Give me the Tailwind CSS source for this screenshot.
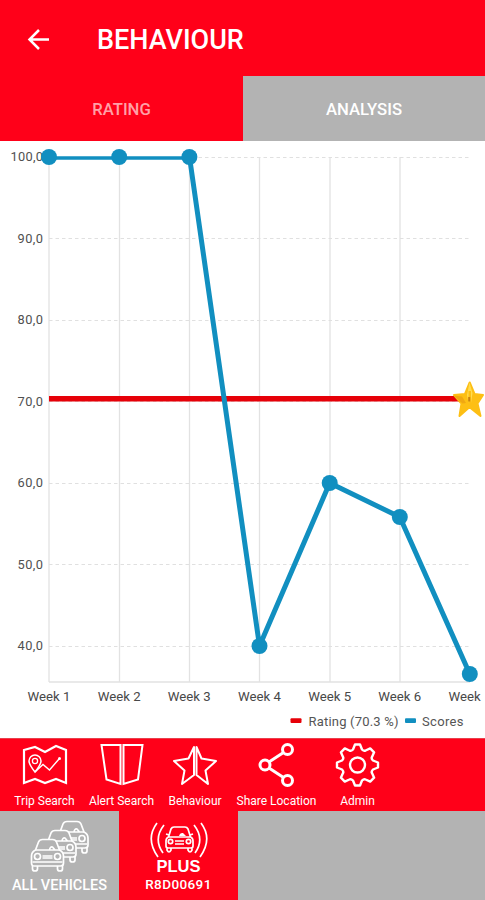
<!DOCTYPE html>
<html lang="en">
<head>
    <meta charset="UTF-8">
    <meta name="viewport" content="width=device-width, initial-scale=1.0">
    <title>Behaviour</title>
    <script src="https://cdn.jsdelivr.net/npm/@tailwindcss/browser@4"></script>
</head>
<body class="w-[485px] h-[900px] overflow-hidden flex flex-col bg-white font-['Roboto',sans-serif]">

    <header class="h-[76px] shrink-0 bg-[#ff0019] flex items-center pl-[26px] pt-[3px] text-white">
        <svg class="w-[24px] h-[24px]" viewBox="0 0 24 24" fill="none" stroke="#fff" stroke-width="2.5">
            <path d="M23 11.5H3.5M13 2L3.5 11.5L13 21"/>
        </svg>
        <h1 class="ml-[47px] pt-[2px] text-[27px] leading-none font-medium">BEHAVIOUR</h1>
    </header>

    <nav class="h-[65px] shrink-0 grid grid-cols-[243px_242px] bg-[#ff0019]">
        <div class="flex items-center justify-center pt-[2px] text-[16.7px] font-medium text-[#ffa0a8]">RATING</div>
        <div class="flex items-center justify-center pt-[2px] bg-[#b3b3b3] text-[16.7px] font-medium text-white">ANALYSIS</div>
    </nav>

    <main class="h-[597px] shrink-0">
        <svg class="block w-[485px] h-[597px]" viewBox="0 0 485 597" font-family="Roboto, sans-serif">
            <!-- grid -->
            <g stroke="#e2e2e2" stroke-width="1.3">
                <path d="M49 16V541M119.5 16V541M189.5 16V541M259.5 16V541M330 16V541M400 16V541M49 541H470"/>
                <path d="M49 16.5H470M49 97.5H470M49 179.5H470M49 260.5H470M49 342.5H470M49 423.5H470M49 505.5H470" stroke="#e0e0e0" stroke-width="1" stroke-dasharray="3.5 3"/>
            </g>
            <!-- y axis -->
            <g fill="#505050" font-size="12.8" text-anchor="end">
                <text x="43" y="20" textLength="32.500">100,0</text>
                <text x="43" y="101.5" textLength="25.500">90,0</text>
                <text x="43" y="183" textLength="25.500">80,0</text>
                <text x="43" y="264.5" textLength="25.500">70,0</text>
                <text x="43" y="346" textLength="25.500">60,0</text>
                <text x="43" y="427.5" textLength="25.500">50,0</text>
                <text x="43" y="509" textLength="25.500">40,0</text>
            </g>
            <!-- x axis -->
            <g fill="#484848" font-size="13.2" text-anchor="middle">
                <text x="49" y="560">Week 1</text>
                <text x="119.2" y="560">Week 2</text>
                <text x="189.3" y="560">Week 3</text>
                <text x="259.5" y="560">Week 4</text>
                <text x="329.7" y="560">Week 5</text>
                <text x="399.8" y="560">Week 6</text>
                <text x="448.5" y="560" text-anchor="start">Week</text>
            </g>
            <!-- rating line -->
            <path d="M49 257.7H470" stroke="#e60008" stroke-width="5.5"/>
            <!-- scores -->
            <path d="M49 17H189.5" stroke="#118fc0" stroke-width="3.5"/>
            <path d="M189.5 16L259.5 505L329.7 342L399.8 376L469.8 533" fill="none" stroke="#118fc0" stroke-width="5" stroke-linejoin="round"/>
            <g fill="#118fc0">
                <circle cx="49" cy="16" r="8"/>
                <circle cx="119.2" cy="16" r="8"/>
                <circle cx="189.4" cy="16" r="8"/>
                <circle cx="259.5" cy="505" r="8"/>
                <circle cx="329.7" cy="342" r="8"/>
                <circle cx="399.8" cy="376" r="8"/>
                <circle cx="469.8" cy="533" r="8"/>
            </g>
            <!-- star marker, split down the middle -->
            <path d="M469.7 241.5L474.5 253L483 254L477.5 262.5L480.500 275L470.500 267H468.500L459.500 275L461.500 262.500L454 254L465 253Z" fill="#fdbf14" stroke="#fdbf14" stroke-width="2" stroke-linejoin="round"/>
            <path d="M469.5 241.5L472.5 252L471 262V250H468.5V262L467 254Z" fill="#ffdc50"/>
            <path d="M453.5 254.5L462 255.5L466 262L462.5 262.5Z" fill="#f0a812"/>
            <path d="M469.2 256V260.5" stroke="#c9820f" stroke-width="2"/>
            <!-- legend -->
            <rect x="290.5" y="577.2" width="11" height="4.8" rx="1" fill="#e60008"/>
            <rect x="405" y="577.2" width="11" height="4.8" rx="1" fill="#118fc0"/>
            <g fill="#555" font-size="13">
                <text x="308.5" y="584.5" textLength="90">Rating (70.3 %)</text>
                <text x="422" y="584.5" textLength="41.5">Scores</text>
            </g>
        </svg>
    </main>

    <section class="h-[73px] shrink-0 bg-[#ff0019] border-t border-[#e8404c] flex text-white text-[12px] leading-[14px]">
        <div class="w-[83px] ml-[3px] flex flex-col items-center">
            <svg class="mt-[4px] w-[46px] h-[44px]" viewBox="0 0 46 44" fill="none" stroke="#fff" stroke-width="2.2">
                <path d="M2 7L13 4L23 9L34 3L44 7V40L34 36L23 40L13 36L2 40Z"/>
                <path d="M13 29C9 24 7 21 7 18A6 6 0 0 1 19 18C19 21 17 24 13 29Z" stroke-width="1.5"/>
                <circle cx="13" cy="18" r="2.6" stroke-width="1.3"/>
                <path d="M13 29L21 21.5L27.5 27L37 16" stroke-width="1.4"/>
                <circle cx="37.5" cy="15.5" r="1.5" fill="#fff" stroke="none"/>
            </svg>
            <span class="mt-[7px]">Trip Search</span>
        </div>
        <div class="w-[71px] flex flex-col items-center whitespace-nowrap">
            <svg class="mt-[4px] w-[46px] h-[44px]" viewBox="0 0 46 44" fill="none" stroke="#fff" stroke-width="2">
                <path d="M2.5 2H21.5V41L7.5 36.5ZM24.5 2H43.5L39 36.5L24.5 41Z"/>
                <path d="M23 1V41.5" stroke="#ff8c98" stroke-width="1"/>
            </svg>
            <span class="mt-[7px]">Alert Search</span>
        </div>
        <div class="w-[76px] flex flex-col items-center">
            <svg class="mt-[4px] w-[46px] h-[44px]" viewBox="0 0 46 44" fill="none" stroke="#fff" stroke-width="2" stroke-linejoin="round">
                <path d="M22 4L16.5 15.5L2 18L12.5 27.5L10 41L22 32ZM24.5 4L29.5 15.5L44 18L33.5 27.5L36 41L24.5 32Z"/>
            </svg>
            <span class="mt-[7px]">Behaviour</span>
        </div>
        <div class="w-[87px] flex flex-col items-center whitespace-nowrap">
            <svg class="mt-[4px] w-[46px] h-[44px]" viewBox="0 0 46 44" fill="none" stroke="#fff" stroke-width="3">
                <circle cx="33.5" cy="6.5" r="5"/>
                <circle cx="11" cy="22" r="5"/>
                <circle cx="33.5" cy="37.5" r="5"/>
                <path d="M15 19L29.5 9.5M15 25L29.5 34.5"/>
            </svg>
            <span class="mt-[7px]">Share Location</span>
        </div>
        <div class="w-[75px] flex flex-col items-center">
            <svg class="mt-[4px] w-[46px] h-[44px]" viewBox="-22.5 -22 46 44" fill="none" stroke="#fff" stroke-width="2.4" stroke-linejoin="round">
                <path d="M-2.5 -20.5H2.5L4.5 -15.5Q6.5 -13.5 8.1 -14.5L12.7 -16.6L16.6 -12.7L14.5 -8.1Q13.5 -6.5 15.5 -4.5L20.5 -2.5V2.5L15.5 4.5Q13.5 6.5 14.5 8.1L16.6 12.7L12.7 16.6L8.1 14.5Q6.5 13.5 4.5 15.5L2.5 20.5H-2.5L-4.5 15.5Q-6.5 13.5 -8.1 14.5L-12.7 16.6L-16.6 12.7L-14.5 8.1Q-13.5 6.5 -15.5 4.5L-20.5 2.5V-2.5L-15.5 -4.5Q-13.5 -6.5 -14.5 -8.1L-16.6 -12.7L-12.7 -16.6L-8.1 -14.5Q-6.5 -13.5 -4.5 -15.5Z"/>
                <circle r="7.5"/>
            </svg>
            <span class="mt-[7px]">Admin</span>
        </div>
    </section>

    <footer class="h-[89px] shrink-0 bg-[#b3b3b3] flex text-white">
        <div class="w-[119px] flex flex-col items-center">
            <svg class="mt-[9px] w-[60px] h-[52px]" viewBox="0 0 60 52" fill="#b3b3b3" stroke="#fff" stroke-width="1.7" stroke-linejoin="round">
                <defs>
                    <g id="car">
                        <path d="M2 24V31Q2 33 4.5 33Q7 33 7 31V28M27 28V31Q27 33 29.5 33Q32 33 32 31V24"/>
                        <path d="M5 12L8 4Q9 1.5 12 1.5H22Q25 1.5 26 4L29 12Q33 14 33 18V25Q33 28 30 28H4Q1 28 1 25V18Q1 14 5 12Z"/>
                        <path d="M5 12H29M19 12Q19.5 8.5 22 9L24.5 12" fill="none"/>
                        <circle cx="7" cy="18.5" r="3"/>
                        <circle cx="27" cy="18.5" r="3"/>
                        <path d="M12 18H22M12 20H22M2 24H32" fill="none" stroke-width="1.3"/>
                    </g>
                </defs>
                <use href="#car" transform="translate(25 0)"/>
                <use href="#car" transform="translate(13 9)"/>
                <use href="#car" transform="translate(0.5 18)"/>
            </svg>
            <span class="mt-[6px] text-[14.5px] leading-[16px] font-medium">ALL VEHICLES</span>
        </div>
        <div class="w-[119px] bg-[#ff0019] flex flex-col items-center">
            <svg class="mt-[10px] w-[60px] h-[37px]" viewBox="0 0 60 37" fill="none" stroke="#fff" stroke-width="1.7" stroke-linejoin="round">
                <path d="M8 2Q-4 18 9 36M15 4Q4 18 14 32M52 2Q64 18 51 36M45 4Q56 18 46 32"/>
                <path d="M19.5 16L22 8Q23 6 25 6H36Q38 6 39 8L41.5 16Q44 17 44 20V25Q44 27 42 27H19Q17 27 17 25V20Q17 17 19.5 16ZM20 16H41M20 14L17 13M41 14L44 13M18 27V29Q20 33 22 29V27M39 27V29Q41 33 43 29V27M26 20H35M26 23H35"/>
                <circle cx="21.5" cy="20.5" r="2.2"/>
                <circle cx="39.5" cy="20.5" r="2.2"/>
                <path d="M30 15Q31 11.5 34 12L37 15Z" fill="#fff" stroke="none"/>
            </svg>
            <span class="text-[16.5px] leading-[17px] font-bold font-['Liberation_Sans',sans-serif]">PLUS</span>
            <span class="mt-px text-[13.5px] leading-[16px] font-medium tracking-[0.4px]">R8D00691</span>
        </div>
    </footer>

</body>
</html>
